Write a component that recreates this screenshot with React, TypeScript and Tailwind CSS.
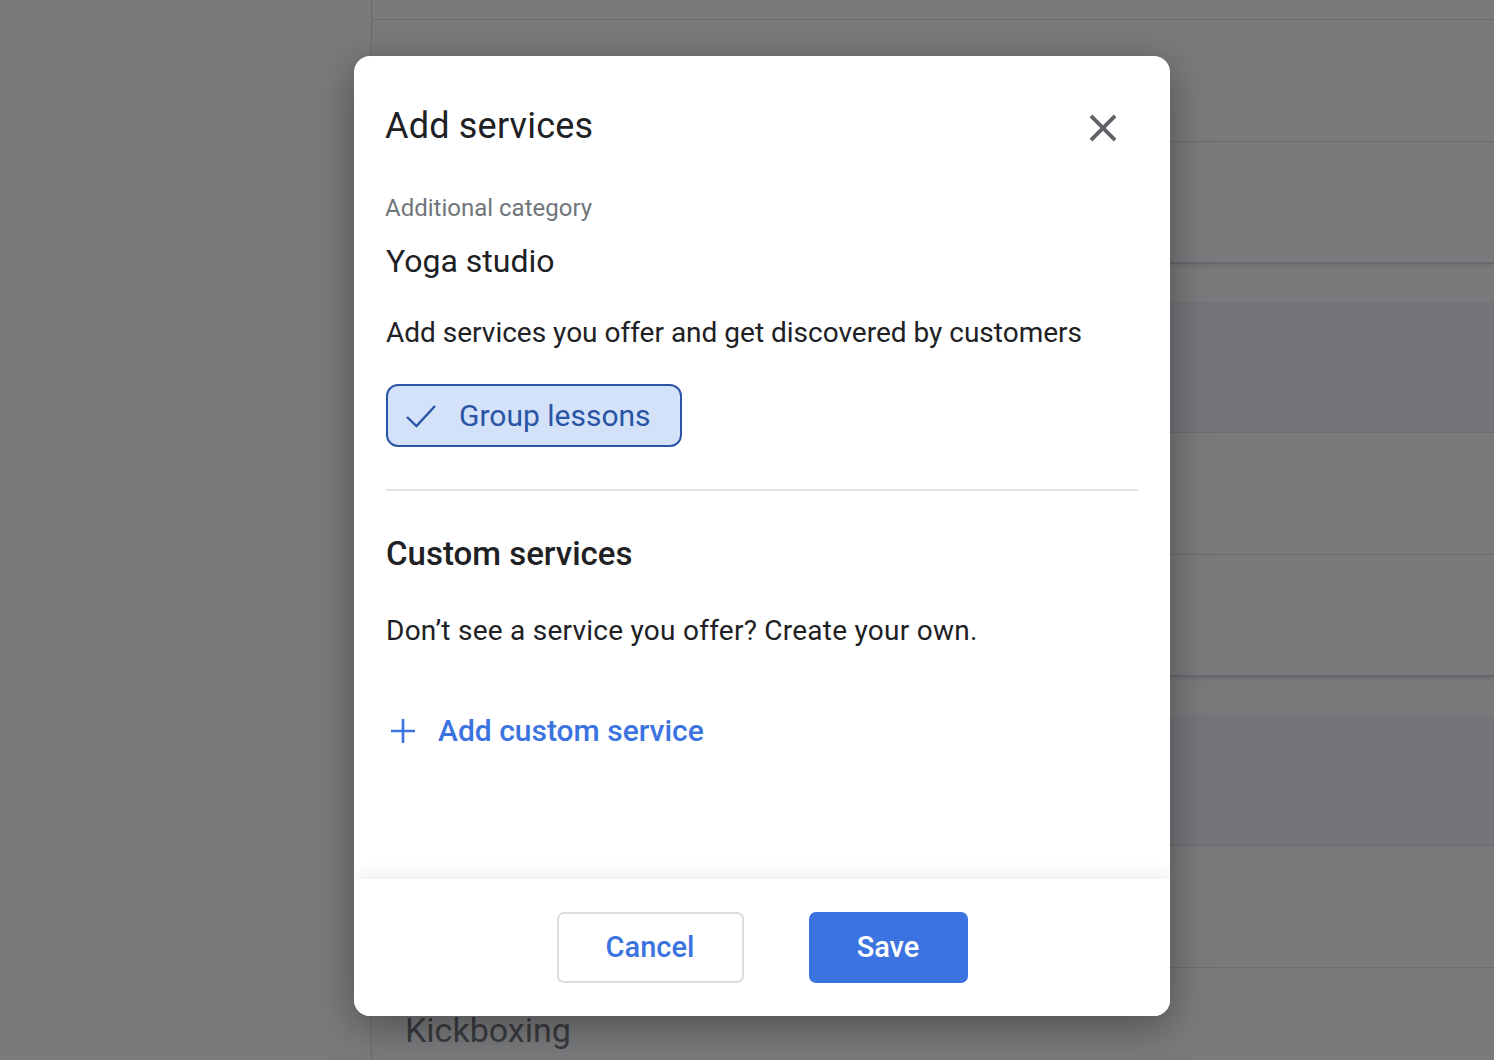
import { useState } from "react";

const sans = { fontFamily: "Roboto, 'Noto Sans', Arial, sans-serif" };

function CloseIcon() {
  return (
    <svg width="46" height="46" viewBox="0 0 24 24" fill="#5f6368" aria-hidden="true">
      <path d="M19 6.41 17.59 5 12 10.59 6.41 5 5 6.41 10.59 12 5 17.59 6.41 19 12 13.41 17.59 19 19 17.59 13.41 12z" />
    </svg>
  );
}

function CheckIcon() {
  return (
    <svg width="32" height="26" viewBox="0 0 32 26" fill="none" aria-hidden="true">
      <polyline points="2,14 11.5,23 30,3" stroke="#2a55a4" strokeWidth="2.4" strokeLinejoin="miter" />
    </svg>
  );
}

function PlusIcon() {
  return (
    <svg width="26" height="26" viewBox="0 0 26 26" fill="none" aria-hidden="true">
      <path d="M13 1v24M1 13h24" stroke="#3b74e0" strokeWidth="2.6" />
    </svg>
  );
}

// faded list sitting behind the dialog
function BackgroundPage() {
  return (
    <div className="flex h-[1060px] w-full overflow-hidden bg-white" style={sans}>
      <div className="w-[372px] shrink-0 border-r border-[#dadce0]" />
      <div className="flex flex-1 flex-col">
        <div className="h-[20px] shrink-0 border-b border-[#dadce0]" />
        <div className="h-[122px] shrink-0 border-b border-[#dadce0]" />
        <div className="h-[122px] shrink-0 border-b-2 border-[#d0d2d6] shadow-[0_2px_4px_rgba(0,0,0,0.12)]" />
        <div className="h-[38px] shrink-0" />
        <div className="h-[131px] shrink-0 border-b border-[#dadce0] bg-[#f1f3f4]" />
        <div className="h-[122px] shrink-0 border-b border-[#dadce0]" />
        <div className="h-[122px] shrink-0 border-b-2 border-[#d0d2d6] shadow-[0_2px_4px_rgba(0,0,0,0.12)]" />
        <div className="h-[38px] shrink-0" />
        <div className="h-[131px] shrink-0 border-b border-[#dadce0] bg-[#f1f3f4]" />
        <div className="h-[122px] shrink-0 border-b border-[#dadce0]" />
        <div className="pl-[33px] pt-[42px]">
          <p className="text-[34px] leading-[40px] text-[#5f6368]">Kickboxing</p>
        </div>
      </div>
    </div>
  );
}

export default function App() {
  const [selected, setSelected] = useState(true);

  return (
    <div className="relative h-[1060px] w-[1494px] overflow-hidden" style={sans}>
      <BackgroundPage />

      <div className="absolute inset-0 bg-[rgba(32,33,36,0.6)]" />

      <div className="absolute left-[354px] top-[56px] flex h-[960px] w-[816px] flex-col overflow-hidden rounded-[16px] bg-white shadow-[0_10px_40px_rgba(0,0,0,0.35)]">
        <div className="flex-1 pl-[31px] pr-[32px] pt-[46px]">
          <div className="flex h-[48px] items-center justify-between">
            <h2 className="text-[36px] leading-[44px] tracking-[0.2px] text-[#202124]">Add services</h2>
            <button className="mr-[12px] mt-[4px]" aria-label="Close">
              <CloseIcon />
            </button>
          </div>

          <p className="mt-[42px] text-[24px] leading-[32px] text-[#70757a]">Additional category</p>
          <p className="mt-[17px] pl-px text-[32px] leading-[40px] text-[#202124]">Yoga studio</p>

          <p className="mt-[34px] pl-px text-[28px] leading-[36px] text-[#202124]">
            Add services you offer and get discovered by customers
          </p>

          <div className="mt-[33px] pl-px">
            <button
              onClick={() => setSelected(!selected)}
              className="flex h-[63px] items-center gap-[22px] rounded-[12px] border-2 border-[#2b55a6] bg-[#d3e2f8] pl-[17px] pr-[29px]"
            >
              {selected && <CheckIcon />}
              <span className="text-[30px] leading-[36px] text-[#2a55a4]">Group lessons</span>
            </button>
          </div>

          <div className="ml-px mt-[42px] h-[2px] bg-[#e3e4e6]" />

          <h3 className="mt-[43px] pl-px text-[33px] font-medium leading-[40px] text-[#202124]">Custom services</h3>
          <p className="mt-[39px] pl-px text-[28px] leading-[36px] tracking-[0.25px] text-[#202124]">
            Don’t see a service you offer? Create your own.
          </p>

          <button className="mt-[62px] flex h-[40px] items-center gap-[22px] pl-[5px]">
            <PlusIcon />
            <span className="text-[30px] font-medium leading-[40px] text-[#3b74e0]">Add custom service</span>
          </button>
        </div>

        <div className="flex h-[137px] shrink-0 items-center justify-center gap-[65px] bg-white shadow-[0_-6px_14px_rgba(0,0,0,0.06)]">
          <button className="h-[71px] w-[187px] rounded-[7px] border-2 border-[#dadce0] bg-white text-[29px] font-medium text-[#3b74e0]">
            Cancel
          </button>
          <button className="h-[71px] w-[159px] rounded-[7px] bg-[#3b74e0] text-[29px] font-medium text-white">
            Save
          </button>
        </div>
      </div>
    </div>
  );
}
